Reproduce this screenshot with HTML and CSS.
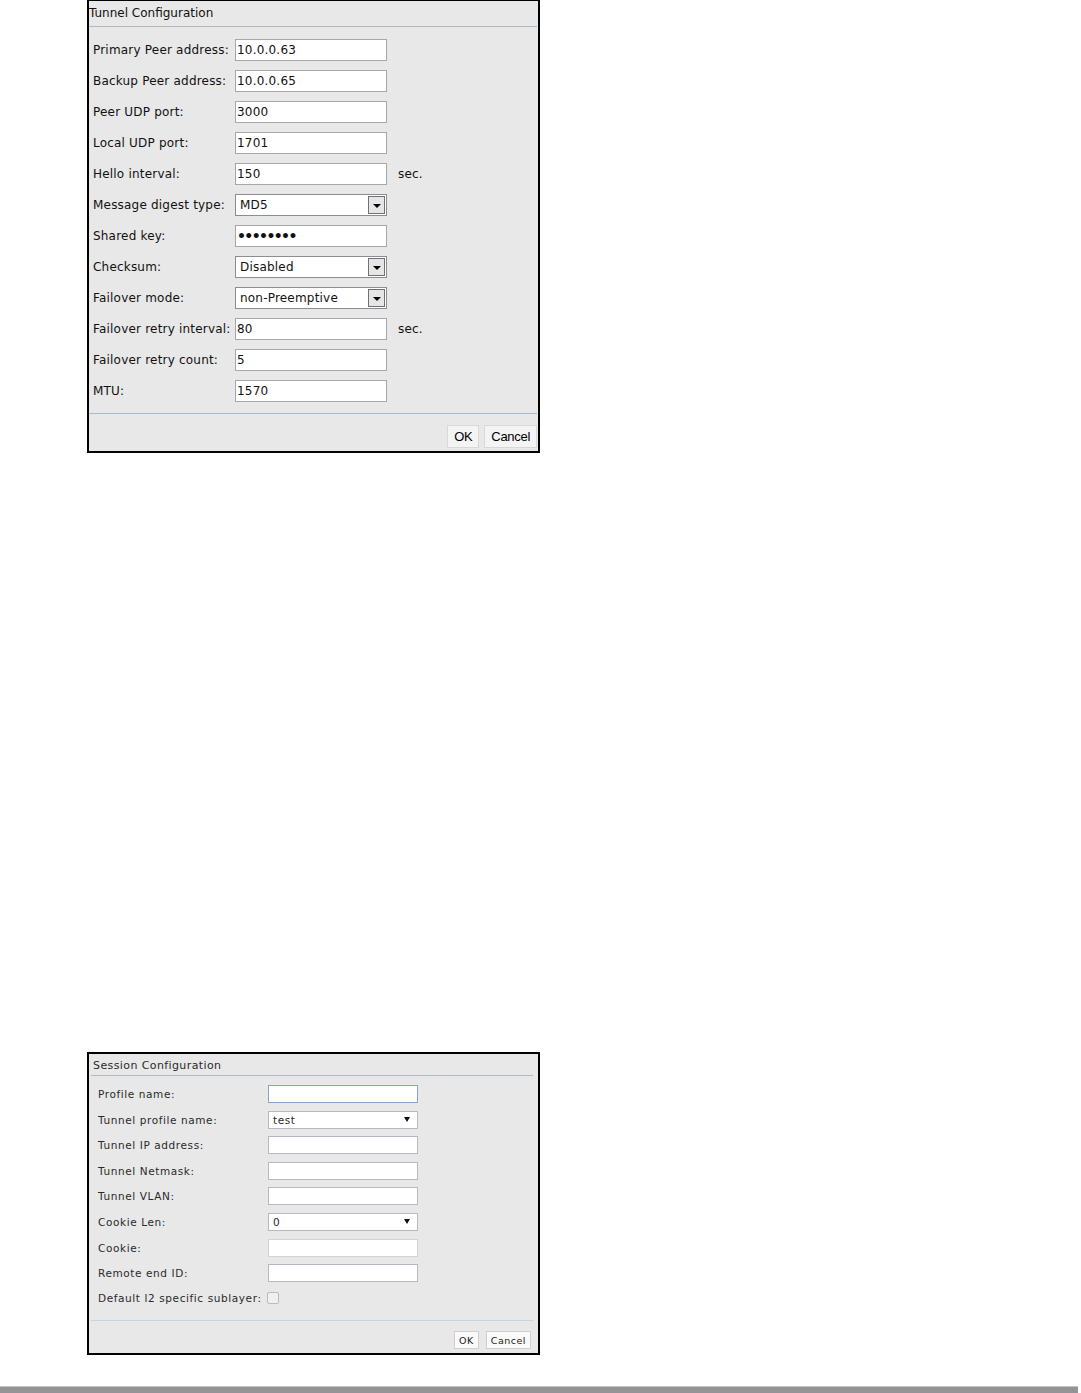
FILE: index.html
```html
<!DOCTYPE html>
<html lang="en">

<head>
    <meta charset="UTF-8">
    <title>Tunnel and Session Configuration</title>
    <link rel="stylesheet" href="styles.css">
</head>

<body>
    <div class="page">
        <!-- Tunnel dialog -->
        <div class="dialog tunnel">
            <div class="dialog-title">Tunnel Configuration</div>
            <div class="form">
                <div class="row"><span class="label">Primary Peer address:</span><span class="field">10.0.0.63</span></div>
                <div class="row"><span class="label">Backup Peer address:</span><span class="field">10.0.0.65</span></div>
                <div class="row"><span class="label">Peer UDP port:</span><span class="field">3000</span></div>
                <div class="row"><span class="label">Local UDP port:</span><span class="field">1701</span></div>
                <div class="row"><span class="label">Hello interval:</span><span class="field">150</span><span class="unit">sec.</span></div>
                <div class="row"><span class="label">Message digest type:</span><span class="field select"><span class="value">MD5</span><span class="drop"></span></span></div>
                <div class="row"><span class="label">Shared key:</span><span class="field password">••••••••</span></div>
                <div class="row"><span class="label">Checksum:</span><span class="field select"><span class="value">Disabled</span><span class="drop"></span></span></div>
                <div class="row"><span class="label">Failover mode:</span><span class="field select"><span class="value">non-Preemptive</span><span class="drop"></span></span></div>
                <div class="row"><span class="label">Failover retry interval:</span><span class="field">80</span><span class="unit">sec.</span></div>
                <div class="row"><span class="label">Failover retry count:</span><span class="field">5</span></div>
                <div class="row"><span class="label">MTU:</span><span class="field">1570</span></div>
            </div>
            <div class="footer">
                <button class="btn">OK</button>
                <button class="btn">Cancel</button>
            </div>
        </div>

        <!-- Session dialog -->
        <div class="dialog session">
            <div class="dialog-title">Session Configuration</div>
            <div class="form">
                <div class="row"><span class="label">Profile name:</span><span class="field focused"></span></div>
                <div class="row"><span class="label">Tunnel profile name:</span><span class="field select"><span class="value">test</span><span class="arrow"></span></span></div>
                <div class="row"><span class="label">Tunnel IP address:</span><span class="field"></span></div>
                <div class="row"><span class="label">Tunnel Netmask:</span><span class="field"></span></div>
                <div class="row"><span class="label">Tunnel VLAN:</span><span class="field"></span></div>
                <div class="row"><span class="label">Cookie Len:</span><span class="field select"><span class="value">0</span><span class="arrow"></span></span></div>
                <div class="row"><span class="label">Cookie:</span><span class="field disabled"></span></div>
                <div class="row"><span class="label">Remote end ID:</span><span class="field"></span></div>
                <div class="row check-row"><span class="label auto">Default l2 specific sublayer:</span><span class="checkbox"></span></div>
            </div>
            <div class="footer">
                <button class="btn">OK</button>
                <button class="btn">Cancel</button>
            </div>
        </div>
    </div>

    <div class="bottom-bar"></div>
</body>

</html>
```

FILE: styles.css
```css
* {
    margin: 0;
    padding: 0;
    box-sizing: border-box;
}

body {
    background-color: #fff;
    font-family: 'DejaVu Sans', Verdana, sans-serif;
    color: #111;
}

.page {
    padding-left: 87px;
}

.dialog {
    width: 453px;
    background-color: #e8e8e8;
    border: 2px solid #000;
    display: flex;
    flex-direction: column;
}

/* Tunnel dialog */
.tunnel {
    height: 453px;
    border-top-width: 1px;
    font-size: 12px;
    letter-spacing: 0.2px;
}

.tunnel .dialog-title {
    height: 26px;
    padding-top: 5px;
    margin-right: 1px;
    border-bottom: 1px solid #a8bccb;
    font-size: 12px;
    letter-spacing: 0;
}

.tunnel .form {
    display: flex;
    flex-direction: column;
    gap: 9px;
    padding: 12px 0 0 4px;
    height: 387px;
    border-bottom: 1px solid #a8bccb;
    margin-right: 1px;
}

.tunnel .row {
    display: flex;
    align-items: center;
    height: 22px;
}

.tunnel .label {
    width: 142px;
    white-space: nowrap;
}

.tunnel .field {
    width: 152px;
    height: 22px;
    background-color: #fff;
    border: 1px solid #a4a8ad;
    padding: 0 1px;
    line-height: 20px;
    display: flex;
    align-items: center;
}

.tunnel .password {
    font-size: 14px;
    letter-spacing: -1.6px;
    font-weight: bold;
}

.tunnel .select {
    padding: 0 0 0 4px;
    border-color: #8a8d92;
}

.tunnel .select .value {
    flex: 1;
}

.tunnel .drop {
    width: 17px;
    height: 18px;
    margin-right: 1px;
    border: 1px solid #6e7074;
    background-color: #e6e6e6;
    position: relative;
}

.tunnel .drop::after {
    content: '';
    position: absolute;
    left: 4px;
    top: 7px;
    border-left: 4px solid transparent;
    border-right: 4px solid transparent;
    border-top: 4px solid #000;
}

.tunnel .unit {
    margin-left: 11px;
}

.tunnel .footer {
    flex: 1;
    display: flex;
    justify-content: flex-end;
    align-items: flex-start;
    gap: 5px;
    padding: 11px 1px 0 0;
}

.tunnel .btn {
    height: 23px;
    padding: 0 6px;
    font-family: 'Liberation Sans', Arial, sans-serif;
    font-size: 13px;
    letter-spacing: -0.3px;
    background-color: #f4f4f4;
    border: 1px solid #d8d8d8;
    color: #000;
}

/* Session dialog */
.session {
    height: 303px;
    margin-top: 599px;
    font-size: 10.5px;
    letter-spacing: 0.6px;
    color: #2a2a2a;
}

.session .dialog-title {
    height: 22px;
    padding: 5px 0 0 2px;
    margin: 0 5px 0 2px;
    border-bottom: 1px solid #a8bccb;
    font-size: 11px;
    letter-spacing: 0.4px;
}

.session .form {
    display: flex;
    flex-direction: column;
    gap: 7.6px;
    padding: 9px 0 0 7px;
    height: 245px;
    margin: 0 5px 0 2px;
    border-bottom: 1px solid #c9d3dc;
}

.session .row {
    display: flex;
    align-items: center;
    height: 18px;
}

.session .check-row {
    height: 14px;
    margin-top: 1px;
}

.session .label {
    width: 170px;
    white-space: nowrap;
}

.session .label.auto {
    width: auto;
    margin-right: 5px;
}

.session .field {
    width: 150px;
    height: 18px;
    background-color: #fff;
    border: 1px solid #b4bac0;
    display: flex;
    align-items: center;
    padding: 0 4px;
}

.session .focused {
    border-color: #87a6c9;
}

.session .disabled {
    border-color: #d0d4d8;
}

.session .select .value {
    flex: 1;
}

.session .arrow {
    width: 0;
    height: 0;
    margin-right: 3px;
    border-left: 3px solid transparent;
    border-right: 3px solid transparent;
    border-top: 5px solid #111;
}

.session .checkbox {
    width: 12px;
    height: 12px;
    border: 1px solid #b8bcc0;
    border-radius: 2px;
    background-color: #f0f0f0;
}

.session .footer {
    flex: 1;
    display: flex;
    justify-content: flex-end;
    align-items: flex-start;
    gap: 7px;
    padding: 10px 7px 0 0;
}

.session .btn {
    height: 18px;
    padding: 0 4px;
    font-family: 'DejaVu Sans', Verdana, sans-serif;
    font-size: 9.5px;
    letter-spacing: 0.5px;
    background-color: #fafafa;
    border: 1px solid #cfcfcf;
    color: #222;
}

.bottom-bar {
    width: 1078px;
    height: 7px;
    margin-top: 31px;
    background-color: #949498;
    border-top: 1px solid #c4c4c6;
}
```
